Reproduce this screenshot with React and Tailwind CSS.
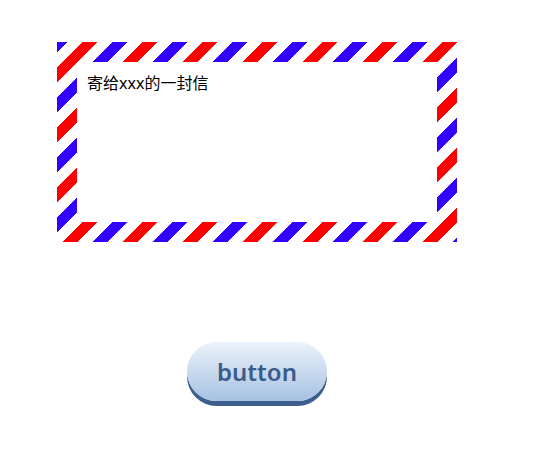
export default function App() {
  return (
    <div className="min-h-[453px] w-[543px] bg-white pt-[42px]">
      {/* airmail envelope */}
      <div className="ml-[57px] h-[200px] w-[400px] p-[20px] bg-[repeating-linear-gradient(-45deg,#3300ff_0,#3300ff_3.5px,transparent_3.5px,transparent_14.1px,#ff0000_14.1px,#ff0000_24.7px,transparent_24.7px,transparent_35.3px,#3300ff_35.3px,#3300ff_42.43px)]">
        <div className="h-full w-full bg-white px-[10px] py-[9px] text-[16px] leading-[24px] text-black font-['Noto_Sans','Noto_Sans_CJK_SC',sans-serif]">
          寄给xxx的一封信
        </div>
      </div>

      <button className="ml-[187px] mt-[100px] flex h-[59px] w-[140px] items-center justify-center rounded-full bg-gradient-to-b from-[#edf3fb] to-[#a6c1e2] shadow-[0_5px_0_#3d5f8e] text-[24px] font-semibold text-[#3b5b8b] font-['Noto_Sans',sans-serif]">
        button
      </button>
    </div>
  );
}
